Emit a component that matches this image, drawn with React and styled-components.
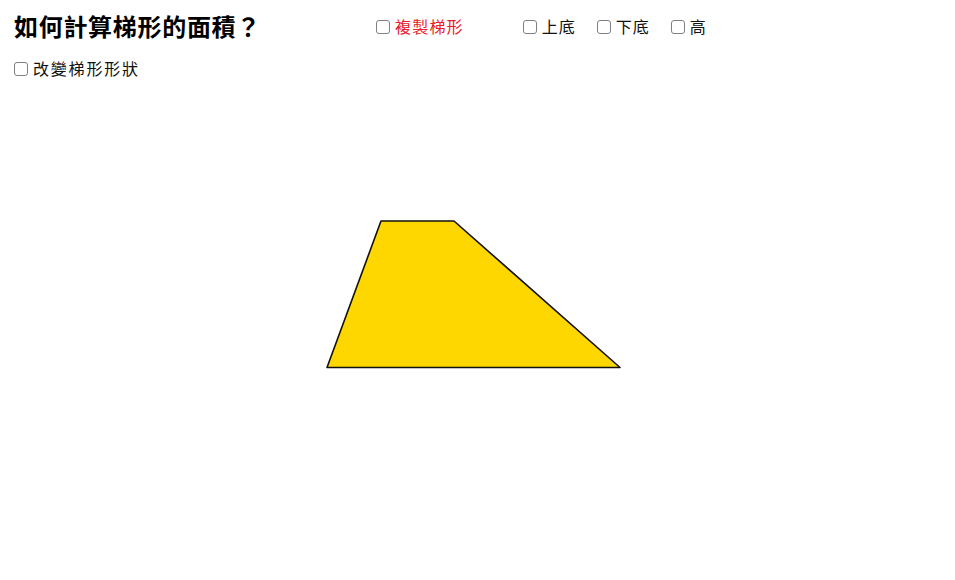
import React from "react";
import styled, { createGlobalStyle } from "styled-components";

const GlobalStyle = createGlobalStyle`
  html, body {
    margin: 0;
    padding: 0;
    background: #ffffff;
  }
  body {
    font-family: "Noto Sans CJK TC", "Noto Sans", sans-serif;
    color: #000;
  }
`;

const Page = styled.div`
  width: 955px;
  height: 580px;
  display: flex;
  flex-direction: column;
  background: #ffffff;
  overflow: hidden;
`;

const TopRow = styled.div`
  display: flex;
  align-items: center;
  height: 50px;
  padding: 2px 0 0 14px;
  box-sizing: border-box;
`;

const Title = styled.h1`
  width: 362px;
  margin: 0;
  font-size: 24px;
  font-weight: 700;
  line-height: 28px;
  letter-spacing: 0.7px;
  white-space: nowrap;
`;

const Options = styled.div`
  display: flex;
  align-items: center;
  gap: ${p => p.$gap || 21}px;
`;

const SecondRow = styled.div`
  display: flex;
  align-items: center;
  height: 36px;
  padding-left: 14px;
`;

const Option = styled.label`
  display: flex;
  align-items: center;
  gap: 5px;
  font-size: 16px;
  line-height: 20px;
  letter-spacing: ${p => p.$spacing || 1}px;
  color: ${p => (p.$red ? "#e8202a" : "#111")};
  cursor: pointer;
  white-space: nowrap;
`;

const Box = styled.span`
  width: 14px;
  height: 14px;
  box-sizing: border-box;
  border: 1.5px solid #808080;
  border-radius: 3px;
  background: #fff;
  flex-shrink: 0;
  margin-top: 1px;
`;

const Canvas = styled.div`
  flex: 1;
  position: relative;
`;

const Shape = styled.svg`
  display: block;
  width: 955px;
  height: 494px;
`;

function CheckOption({ label, red, spacing }) {
  return (
    <Option $red={red} $spacing={spacing}>
      <Box />
      {label}
    </Option>
  );
}

export default function App() {
  return (
    <Page>
      <GlobalStyle />
      <TopRow>
        <Title>如何計算梯形的面積？</Title>
        <Options $gap={59}>
          <CheckOption label="複製梯形" red spacing={1.2} />
          <Options $gap={21}>
            <CheckOption label="上底" />
            <CheckOption label="下底" />
            <CheckOption label="高" />
          </Options>
        </Options>
      </TopRow>
      <SecondRow>
        <CheckOption label="改變梯形形狀" spacing={1.8} />
      </SecondRow>
      <Canvas>
        <Shape viewBox="0 86 955 494">
          <polygon
            points="381,221 454,221 620,367.5 327,367.5"
            fill="#ffd700"
            stroke="#111"
            strokeWidth="1.6"
            strokeLinejoin="round"
          />
        </Shape>
      </Canvas>
    </Page>
  );
}
